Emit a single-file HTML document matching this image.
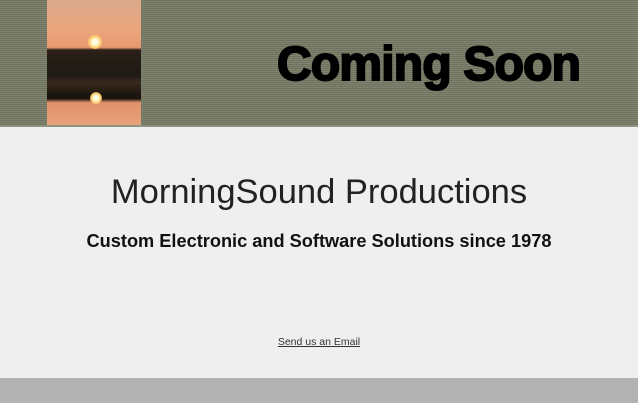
<!DOCTYPE html>
<html><head><style>
body{margin:0;width:638px;height:403px;overflow:hidden;background:#efefef;font-family:"Liberation Sans",Arial,sans-serif;position:relative}
.hd{position:absolute;left:0;top:0;width:638px;height:125px;background:repeating-linear-gradient(#6e725f 0 1px,#80846f 1px 2px);border-bottom:2px solid #8f9482}
.img{position:absolute;left:47px;top:0;width:94px;height:125px;background:linear-gradient(#d9a98a 0%,#eba57c 25%,#e9986f 38%,#2a2018 40%,#1e1a14 60%,#3a2a1c 66%,#1a140e 76%,#1c140e 79%,#e0926a 82%,#e8a27c 100%)}
.sun{position:absolute;border-radius:50%;background:radial-gradient(#fffbe0 30%,#ffd070 55%,rgba(255,180,90,0) 100%)}
.cs{position:absolute;left:277px;top:37px;font-size:48px;font-weight:bold;letter-spacing:-0.8px;color:#000;-webkit-text-stroke:2px #000}
h1{position:absolute;left:0;width:638px;top:173px;margin:0;text-align:center;font-size:34.5px;font-weight:normal;color:#222}
h2{position:absolute;left:0;width:638px;top:231px;margin:0;text-align:center;font-size:18.2px;font-weight:bold;color:#111}
a{position:absolute;left:0;width:638px;top:336px;text-align:center;font-size:10.5px;color:#333;text-decoration:underline}
.ft{position:absolute;left:0;top:378px;width:638px;height:25px;background:#b3b3b3}
</style></head><body>
<div class="hd"><div class="img"><div class="sun" style="left:41px;top:35px;width:14px;height:14px"></div><div class="sun" style="left:43px;top:92px;width:12px;height:12px"></div></div>
<div class="cs">Coming Soon</div></div>
<h1>MorningSound Productions</h1>
<h2>Custom Electronic and Software Solutions since 1978</h2>
<a>Send us an Email</a>
<div class="ft"></div>
</body></html>
